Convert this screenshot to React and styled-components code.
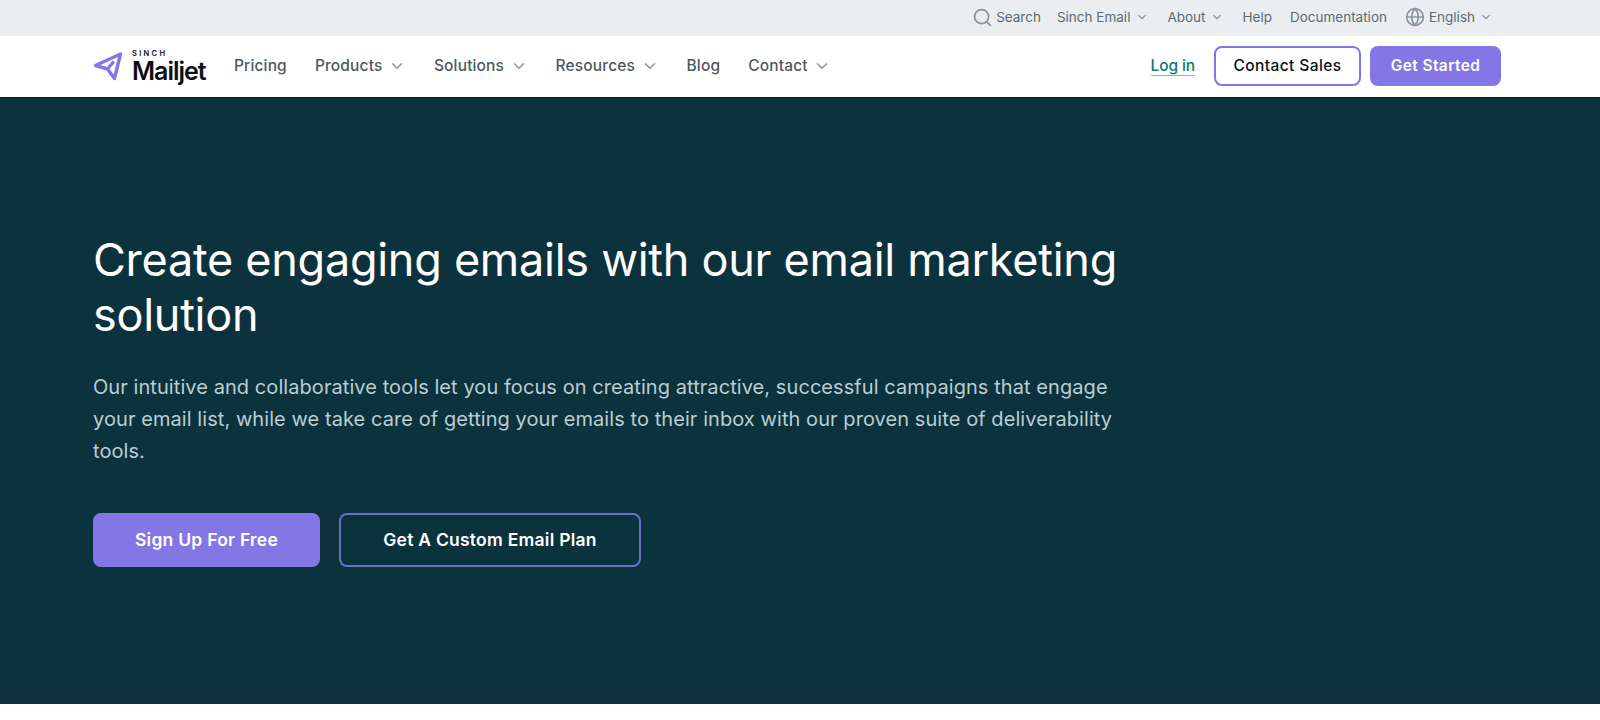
import React from "react";
import styled, { createGlobalStyle } from "styled-components";
import { ChevronDown, Search, Globe } from "lucide-react";

const GlobalStyle = createGlobalStyle`
html, body {
  margin: 0;
  padding: 0;
  background: #fff;
  font-family: "Inter", "Liberation Sans", sans-serif;
}
* { box-sizing: border-box; }
`;

const TopBar = styled.div`
height: 36px;
background: #ebeef0;
display: flex;
justify-content: flex-end;
align-items: center;
padding: 0 107px 2px 0;
color: #5b6a72;
font-size: 13.5px;
`;

const TopItem = styled.span`
display: flex;
align-items: center;
gap: ${(p) => p.$gap || 5}px;
margin-left: ${(p) => p.$left || 18}px;
`;

const NavBar = styled.div`
height: 61px;
background: #fff;
display: flex;
align-items: center;
justify-content: space-between;
padding: 0 99px 2px 93px;
`;

const NavLeft = styled.div`
display: flex;
align-items: center;
`;

const Logo = styled.div`
display: flex;
align-items: center;
gap: 9px;
width: 141px;
`;

const LogoWords = styled.div`
display: flex;
flex-direction: column;
gap: 1px;
color: #0b0f14;
`;

const LogoSmall = styled.span`
font-size: 7.5px;
font-weight: 600;
letter-spacing: 2.3px;
line-height: 9px;
`;

const LogoBig = styled.span`
font-size: 25px;
font-weight: 600;
letter-spacing: -1px;
line-height: 24px;
`;

const NavItem = styled.span`
display: flex;
align-items: center;
gap: 5.5px;
margin-right: 28px;
color: #4c5a62;
font-size: 15.5px;
font-weight: 500;
letter-spacing: 0.15px;
`;

const NavRight = styled.div`
display: flex;
align-items: center;
`;

const LogIn = styled.a`
color: #0a7a78;
font-size: 15.5px;
font-weight: 500;
letter-spacing: -0.1px;
border-bottom: 1px solid #7fb9b6;
line-height: 18px;
margin: 2px 19px 0 0;
`;

const SmallButton = styled.button`
height: 40px;
width: ${(p) => p.$width}px;
margin-left: ${(p) => p.$left || 0}px;
border-radius: 8px;
font-family: inherit;
font-size: 15.5px;
font-weight: ${(p) => (p.$filled ? 600 : 500)};
letter-spacing: 0.4px;
color: ${(p) => (p.$filled ? "#fff" : "#0b0f14")};
background: ${(p) => (p.$filled ? "#8377e6" : "#fff")};
border: ${(p) => (p.$filled ? "none" : "2px solid #8377e6")};
`;

const Hero = styled.section`
height: 607px;
background: #0c323e;
padding: 134px 0 0 93px;
border-top: 1px solid #06222c;
`;

const Title = styled.h1`
margin: 0;
width: 1060px;
color: #fff;
font-size: 45px;
font-weight: 400;
line-height: 55px;
letter-spacing: -0.27px;
`;

const Lead = styled.p`
margin: 29px 0 0;
width: 1030px;
color: #b9ced3;
font-size: 20px;
line-height: 32px;
letter-spacing: 0.07px;
`;

const Actions = styled.div`
display: flex;
gap: 19px;
margin-top: 46px;
`;

const HeroButton = styled.button`
height: 54px;
width: ${(p) => p.$width}px;
padding: 0 0 2px;
border-radius: 8px;
font-family: inherit;
font-size: 17.5px;
font-weight: 600;
letter-spacing: 0.25px;
color: #fff;
background: ${(p) => (p.$filled ? "#8377e6" : "transparent")};
border: ${(p) => (p.$filled ? "none" : "2px solid #6a6fca")};
`;

const MailjetMark = () => (
  <svg width="30" height="30" viewBox="0 0 30 30" fill="none">
    <path
      d="M2.5 14.5 L27.5 3 L21.5 27.5 L14.5 18 Z M14.5 18 L20 11.5"
      stroke="#8377e6"
      strokeWidth="3.4"
      strokeLinejoin="round"
      strokeLinecap="round"
    />
  </svg>
);

const TopChevron = () => <ChevronDown size={14} strokeWidth={2} color="#8a969c" />;
const NavChevron = () => <ChevronDown size={18} strokeWidth={2} color="#8a969c" />;

export default function App() {
  return (
    <>
      <GlobalStyle />
      <TopBar>
        <TopItem $gap={3}>
          <Search size={21} strokeWidth={2} color="#8a969c" />
          Search
        </TopItem>
        <TopItem $left={16}>
          Sinch Email
          <TopChevron />
        </TopItem>
        <TopItem>
          About
          <TopChevron />
        </TopItem>
        <TopItem>Help</TopItem>
        <TopItem>Documentation</TopItem>
        <TopItem $gap={4}>
          <Globe size={20} strokeWidth={2} color="#8a969c" />
          English
          <TopChevron />
        </TopItem>
      </TopBar>
      <NavBar>
        <NavLeft>
          <Logo>
            <MailjetMark />
            <LogoWords>
              <LogoSmall>SINCH</LogoSmall>
              <LogoBig>Mailjet</LogoBig>
            </LogoWords>
          </Logo>
          <NavItem>Pricing</NavItem>
          <NavItem>
            Products
            <NavChevron />
          </NavItem>
          <NavItem>
            Solutions
            <NavChevron />
          </NavItem>
          <NavItem>
            Resources
            <NavChevron />
          </NavItem>
          <NavItem>Blog</NavItem>
          <NavItem>
            Contact
            <NavChevron />
          </NavItem>
        </NavLeft>
        <NavRight>
          <LogIn>Log in</LogIn>
          <SmallButton $width={147}>Contact Sales</SmallButton>
          <SmallButton $filled $width={131} $left={9}>
            Get Started
          </SmallButton>
        </NavRight>
      </NavBar>
      <Hero>
        <Title>Create engaging emails with our email marketing solution</Title>
        <Lead>
          Our intuitive and collaborative tools let you focus on creating attractive, successful campaigns that
          engage your email list, while we take care of getting your emails to their inbox with our proven suite of
          deliverability tools.
        </Lead>
        <Actions>
          <HeroButton $filled $width={227}>
            Sign Up For Free
          </HeroButton>
          <HeroButton $width={302}>Get A Custom Email Plan</HeroButton>
        </Actions>
      </Hero>
    </>
  );
}
